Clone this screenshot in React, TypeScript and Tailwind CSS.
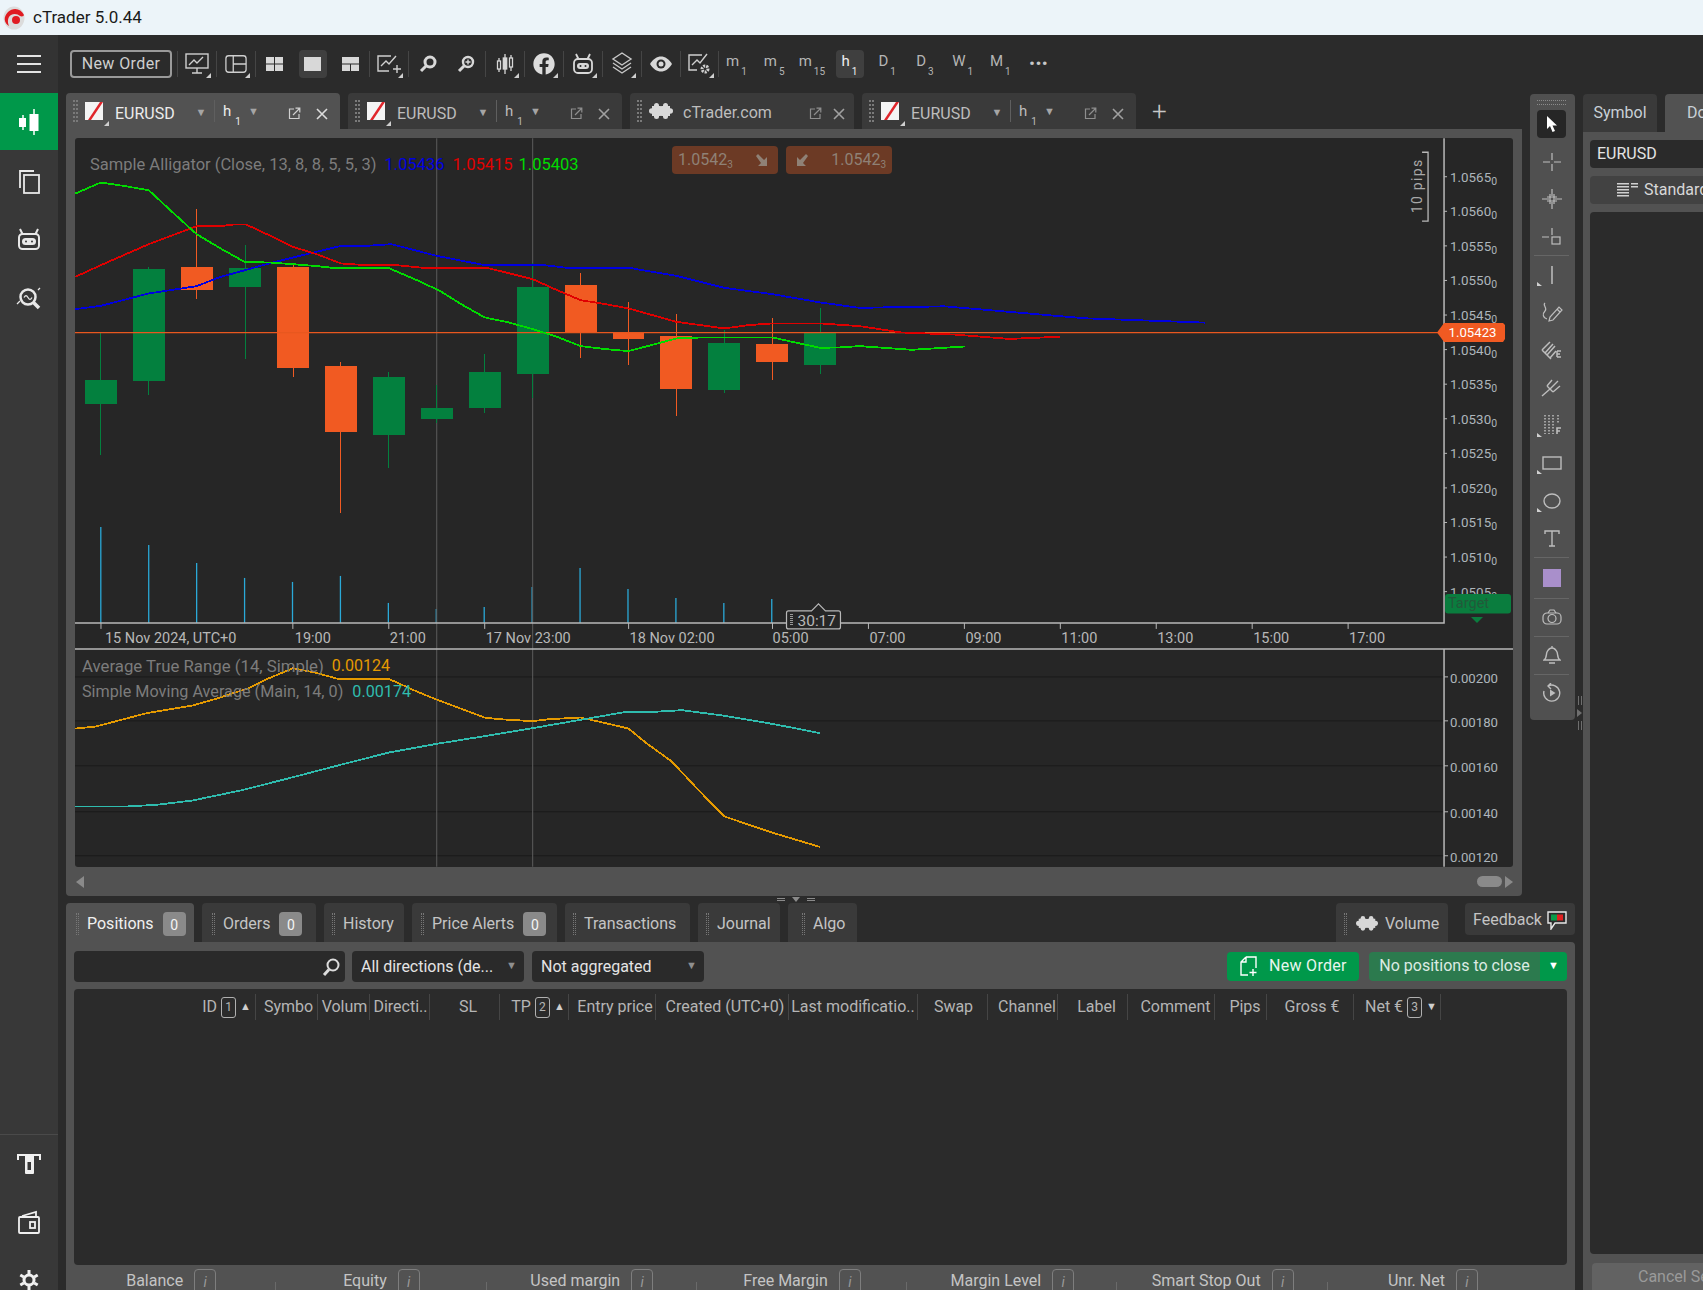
import { FaFacebook } from 'react-icons/fa'

const z7 = (pts: number[][]) => pts.map(([x, y]) => [60 + x / 1.96, 130 + y / 3])
const z8 = (pts: number[][]) => pts.map(([x, y]) => [60 + x / 1.96, 530 + y / 3])
const disp = (pts: number[][]) => pts.map(([x, y]) => [x * 1.0861, y * 1.0859])
const line = (pts: number[][]) => pts.map(([x, y]) => `${x.toFixed(1)},${y.toFixed(1)}`).join(' ')

const greenLine = [
  ...z7([[30, 190], [80, 157], [125, 167], [174, 180], [220, 245], [268, 312], [315, 355], [363, 396], [410, 397], [457, 402], [505, 408], [540, 414], [645, 414], [700, 450], [745, 482], [790, 525], [833, 562], [880, 577], [927, 597], [975, 620], [1021, 648], [1070, 657], [1115, 663], [1165, 643], [1209, 625], [1260, 622], [1397, 622], [1445, 638], [1491, 653], [1530, 652], [1568, 648]]),
  ...disp([[840, 322], [889, 319]]),
]
const redLine = [
  ...z7([[30, 440], [80, 405], [174, 342], [268, 288], [315, 288], [340, 283], [365, 283], [410, 315], [457, 350], [505, 373], [551, 400], [600, 405], [660, 405], [720, 414], [840, 414], [927, 447], [975, 480], [1021, 510], [1070, 522], [1115, 535], [1209, 575], [1303, 595], [1350, 585], [1397, 580], [1491, 580], [1568, 588]]),
  ...disp([[830, 306], [880, 308], [930, 312], [977, 310]]),
]
const blueLine = [
  ...z7([[30, 537], [80, 527], [174, 490], [268, 468], [315, 440], [363, 420], [410, 400], [457, 382], [551, 347], [600, 347], [650, 342], [739, 377], [833, 405], [950, 405], [1000, 414], [1120, 414], [1209, 437], [1303, 473], [1397, 492], [1491, 517], [1568, 533]]),
  ...disp([[870, 282], [1000, 293], [1110, 297]]),
]
const atrLine = z8([[30, 596], [70, 590], [120, 570], [170, 550], [260, 527], [310, 505], [370, 475], [410, 445], [457, 415], [500, 428], [545, 447], [645, 447], [700, 485], [740, 510], [833, 563], [860, 568], [927, 574], [960, 568], [1021, 563], [1070, 580], [1115, 596], [1150, 640], [1200, 695], [1255, 785], [1303, 860], [1400, 910], [1491, 952]])
const smaLine = z8([[30, 830], [130, 830], [190, 825], [260, 812], [360, 780], [450, 745], [550, 705], [645, 668], [739, 642], [833, 619], [927, 595], [1021, 570], [1110, 546], [1165, 546], [1220, 541], [1300, 557], [1400, 583], [1491, 610]])

// cx, body top, body bottom, wick top, wick bottom, up?
const candles: [number, number, number, number, number, boolean][] = [
  [80, 750, 822, 610, 975, true],
  [174, 417, 753, 412, 795, true],
  [268, 412, 480, 237, 507, false],
  [363, 413, 470, 345, 687, true],
  [457, 412, 714, 400, 741, false],
  [551, 709, 907, 696, 1150, false],
  [645, 741, 915, 727, 1015, true],
  [739, 835, 866, 765, 880, true],
  [833, 727, 835, 673, 849, true],
  [927, 471, 731, 400, 805, true],
  [1021, 466, 608, 430, 683, false],
  [1115, 608, 628, 516, 705, false],
  [1209, 619, 776, 552, 858, false],
  [1303, 638, 781, 600, 790, true],
  [1397, 642, 695, 565, 750, false],
  [1491, 610, 704, 535, 731, true],
]
const volumes = [527, 545, 563, 578, 582, 576, 603, 609, 607, 587, 568, 589, 598, 603, 599]
const prices = ['1.0565', '1.0560', '1.0555', '1.0550', '1.0545', '1.0540', '1.0535', '1.0530', '1.0525', '1.0520', '1.0515', '1.0510', '1.0505']
const times: [number, string][] = [[105, '15 Nov 2024, UTC+0'], [295, '19:00'], [390, '21:00'], [486, '17 Nov 23:00'], [630, '18 Nov 02:00'], [773, '05:00'], [870, '07:00'], [966, '09:00'], [1062, '11:00'], [1158, '13:00'], [1254, '15:00'], [1350, '17:00']]
const ticks = [101, 293, 389, 485, 629, 773, 869, 965, 1061, 1157, 1253, 1349]
const subLevels: [number, string][] = [[677, '0.00200'], [721, '0.00180'], [766, '0.00160'], [812, '0.00140'], [856, '0.00120']]

const Corner = () => <span className="absolute bottom-0 right-0 h-0 w-0 border-b-[5px] border-l-[5px] border-b-[#cfcfcf] border-l-transparent" />

function Grip() {
  return <span className="h-[22px] w-[5px] shrink-0 border-x-2 border-dotted border-[#7a7a7a]" />
}

function Puzzle({ w = 24, color = '#d8d8d8', bg = '#3a3a3a' }: { w?: number; color?: string; bg?: string }) {
  return (
    <svg width={w} height={(w * 2) / 3} viewBox="0 0 24 16" fill={color}>
      <rect x="3" y="3" width="18" height="10" />
      <circle cx="2.800" cy="8" r="2.800" />
      <circle cx="21.200" cy="8" r="2.800" />
      <rect x="5" y="0" width="5" height="16" rx="2.500" />
      <rect x="14" y="0" width="5" height="16" rx="2.500" />
      <circle cx="12" cy="1.500" r="1.700" fill={bg} />
      <circle cx="12" cy="14.500" r="1.700" fill={bg} />
    </svg>
  )
}

function Flag() {
  return (
    <span className="relative block h-[24px] w-[24px] shrink-0">
      <svg width="18" height="18" viewBox="0 0 18 18" className="block">
        <rect width="18" height="18" fill="#f4f4f4" />
        <path d="M3 18 15 0h3L6 18z" fill="#e0252b" />
      </svg>
      <Corner />
    </span>
  )
}

function Pop({ dim }: { dim?: boolean }) {
  return (
    <svg width="13" height="13" viewBox="0 0 13 13" fill="none" stroke={dim ? '#8e8e8e' : '#d0d0d0'} strokeWidth="1.2">
      <path d="M6 2H1.5v9.5H11V7" />
      <path d="M5 8l6.5-6.5M7.5 1.2h4.3v4.3" />
    </svg>
  )
}

function Cross({ dim }: { dim?: boolean }) {
  return (
    <svg width="12" height="12" viewBox="0 0 12 12" stroke={dim ? '#a0a0a0' : '#dcdcdc'} strokeWidth="1.6">
      <path d="M1 1l10 10M11 1 1 11" />
    </svg>
  )
}

function Tf({ a, b, on }: { a: string; b: string; on?: boolean }) {
  return (
    <span className={`flex h-[28px] w-[28px] items-center justify-center rounded ${on ? 'bg-[#3f3f3f] text-[#f0f0f0]' : 'text-[#b5b5b5]'}`}>
      <span className="-mt-[5px] text-[15px] leading-none">{a}</span>
      <span className="mt-[15px] ml-[2px] text-[10px] leading-none">{b}</span>
    </span>
  )
}

function SymbolTab({ active, w }: { active?: boolean; w: string }) {
  const fg = active ? 'text-[#ececec]' : 'text-[#bdbdbd]'
  return (
    <div className={`flex h-full shrink-0 items-center rounded-t pl-[7px] ${w} ${active ? 'bg-[#525252]' : 'bg-[#3a3a3a]'}`}>
      <Grip />
      <span className="ml-[7px] mt-[6px]"><Flag /></span>
      <span className={`ml-[6px] mt-[5px] w-[78px] text-[16px] ${fg}`}>EURUSD</span>
      <span className="mt-[4px] w-[16px] text-center text-[11px] text-[#a5a5a5]">▼</span>
      <span className="ml-[5px] h-[22px] w-px bg-[#5f5f5f]" />
      <span className={`ml-[8px] text-[15px] ${fg}`}>h</span>
      <span className={`ml-[4px] mt-[20px] text-[10px] ${fg}`}>1</span>
      <span className="ml-[7px] mt-[2px] text-[11px] text-[#a5a5a5]">▼</span>
      <span className="flex flex-1 justify-end pr-[15px] pt-[5px]"><Pop dim={!active} /></span>
      <span className="w-[24px] pt-[5px]"><Cross dim={!active} /></span>
    </div>
  )
}

function Sep() {
  return <span className="h-[26px] w-px shrink-0 bg-[#454545]" />
}

function TopIcon({ children, corner, on }: { children: React.ReactNode; corner?: boolean; on?: boolean }) {
  return (
    <span className="flex w-[37.900px] shrink-0 justify-center">
      <span className={`relative flex h-[28px] w-[28px] items-center justify-center rounded ${on ? 'bg-[#3f3f3f]' : ''}`}>
        {children}
        {corner && <Corner />}
      </span>
    </span>
  )
}

const stroke = { fill: 'none', stroke: '#cfcfcf', strokeWidth: 1.4 }

function Toolbar() {
  return (
    <div className="flex h-[58px] shrink-0 items-center pl-[4px]">
      <button className="mr-[5px] h-[28px] w-[102px] shrink-0 rounded border-2 border-[#9a9a9a] text-[16px] tracking-[0.4px] text-[#cfcfcf]">New Order</button>
      <Sep />
      <TopIcon corner>
        <svg width="24" height="22" viewBox="0 0 24 22" {...stroke}><rect x="1" y="1" width="22" height="14" /><path d="M4 12l5-5 3 3 6-6M7 20h10M12 15v5" /></svg>
      </TopIcon>
      <Sep />
      <TopIcon corner>
        <svg width="22" height="20" viewBox="0 0 24 20" {...stroke}><rect x="1" y="1" width="22" height="18" rx="3" /><path d="M9 1v18M9 10h14" /></svg>
      </TopIcon>
      <Sep />
      <TopIcon>
        <svg width="17" height="14" viewBox="0 0 17 14" fill="#d8d8d8"><rect width="8" height="6.5" /><rect x="9" width="8" height="6.5" /><rect y="7.5" width="8" height="6.5" /><rect x="9" y="7.5" width="8" height="6.5" /></svg>
      </TopIcon>
      <TopIcon on>
        <svg width="17" height="14" viewBox="0 0 17 14" fill="#d8d8d8"><rect width="17" height="14" /></svg>
      </TopIcon>
      <TopIcon>
        <svg width="17" height="14" viewBox="0 0 17 14" fill="#d8d8d8"><rect width="17" height="6.5" /><rect y="7.5" width="8" height="6.5" /><rect x="9" y="7.5" width="8" height="6.5" /></svg>
      </TopIcon>
      <Sep />
      <TopIcon corner>
        <svg width="24" height="22" viewBox="0 0 24 22" {...stroke}><path d="M14 3H1v15h11" /><path d="M4 13l5-5 3 3 7-8M20 12v8M16 16h8" /></svg>
      </TopIcon>
      <Sep />
      <TopIcon>
        <svg width="18" height="18" viewBox="0 0 18 18" fill="none" stroke="#d8d8d8"><circle cx="11" cy="7" r="5" strokeWidth="3" /><path d="M7 11l-5 5" strokeWidth="3" /></svg>
      </TopIcon>
      <TopIcon>
        <svg width="18" height="18" viewBox="0 0 18 18" fill="none" stroke="#d8d8d8"><circle cx="11" cy="7" r="5" strokeWidth="2.4" /><path d="M7 11l-5 5" strokeWidth="3" /><path d="M11 4.5v5M8.5 7h5" strokeWidth="1.4" /></svg>
      </TopIcon>
      <Sep />
      <TopIcon corner>
        <svg width="20" height="24" viewBox="0 0 20 24" stroke="#d8d8d8" fill="none" strokeWidth="1.3"><path d="M4 6v14M10 2v20M16 3v16" /><rect x="2.5" y="9" width="3" height="8" fill="#2b2b2b" /><rect x="8.3" y="6" width="3.4" height="11" fill="#d8d8d8" /><rect x="14.5" y="6" width="3" height="9" fill="#2b2b2b" /></svg>
      </TopIcon>
      <Sep />
      <TopIcon corner>
        <FaFacebook size={22} color="#dcdcdc" />
      </TopIcon>
      <Sep />
      <TopIcon corner>
        <svg width="24" height="22" viewBox="0 0 24 22" fill="none" stroke="#d8d8d8" strokeWidth="1.8"><path d="M5 1l2.5 5M19 1l-2.5 5" /><rect x="3" y="6" width="18" height="14" rx="4" /><rect x="6" y="10" width="12" height="6" rx="3" fill="#d8d8d8" stroke="none" /><circle cx="9.5" cy="13" r="1" fill="#2b2b2b" stroke="none" /><circle cx="14.5" cy="13" r="1" fill="#2b2b2b" stroke="none" /></svg>
      </TopIcon>
      <Sep />
      <TopIcon corner>
        <svg width="24" height="24" viewBox="0 0 24 24" fill="none" stroke="#c8c8c8" strokeWidth="1.4"><path d="M12 1l9 6-9 6-9-6z" /><path d="M3 11l9 6 9-6M3 15l9 6 9-6" /></svg>
      </TopIcon>
      <Sep />
      <TopIcon>
        <svg width="24" height="16" viewBox="0 0 24 16"><path d="M1 8c3-5 7-7.500 11-7.500S20 3 23 8c-3 5-7 7.500-11 7.500S4 13 1 8z" fill="#d8d8d8" /><circle cx="12" cy="8" r="4.500" fill="#2b2b2b" /><circle cx="12" cy="8" r="2.500" fill="#d8d8d8" /></svg>
      </TopIcon>
      <Sep />
      <TopIcon corner>
        <svg width="24" height="24" viewBox="0 0 24 24" {...stroke}><path d="M14 3H1v15h8" /><path d="M4 13l5-5 3 3 7-9" /><circle cx="17" cy="17" r="3" strokeWidth="3" strokeDasharray="2 1" /></svg>
      </TopIcon>
      <Sep />
      <span className="ml-[3px] flex items-center gap-[9.700px]">
        <Tf a="m" b="1" />
        <Tf a="m" b="5" />
        <Tf a="m" b="15" />
        <Tf a="h" b="1" on />
        <Tf a="D" b="1" />
        <Tf a="D" b="3" />
        <Tf a="W" b="1" />
        <Tf a="M" b="1" />
      </span>
      <span className="ml-[15px] text-[15px] font-bold tracking-[1px] text-[#c8c8c8]">•••</span>
    </div>
  )
}

function Sidebar() {
  return (
    <aside className="flex h-full w-[58px] shrink-0 flex-col bg-[#383838]">
      <div className="flex h-[58px] shrink-0 flex-col items-center justify-center gap-[6px] bg-[#333333]">
        <span className="h-[2px] w-[24px] bg-[#e4e4e4]" />
        <span className="h-[2px] w-[24px] bg-[#e4e4e4]" />
        <span className="h-[2px] w-[24px] bg-[#e4e4e4]" />
      </div>
      <div className="flex h-[57px] shrink-0 items-center justify-center bg-[#00984a]">
        <svg width="22" height="26" viewBox="0 0 22 26" fill="#fff" stroke="#fff" strokeWidth="1.500"><path d="M5 6v15M16 0v26" /><rect x="1" y="9" width="7" height="9" stroke="none" /><rect x="11.500" y="5" width="9" height="17" stroke="none" /></svg>
      </div>
      <div className="flex h-[58px] shrink-0 items-center justify-center pt-[6px]">
        <svg width="22" height="24" viewBox="0 0 22 24" fill="none" stroke="#e8e8e8" strokeWidth="1.800"><path d="M16 1H2v17" /><rect x="6" y="5" width="15" height="18" /></svg>
      </div>
      <div className="flex h-[58px] shrink-0 items-center justify-center pt-[4px]">
        <svg width="24" height="22" viewBox="0 0 24 22" fill="none" stroke="#e8e8e8" strokeWidth="2"><path d="M3 1l2.500 5M21 1l-2.500 5" /><rect x="2" y="6" width="20" height="15" rx="3.500" /><rect x="5" y="10" width="14" height="7" rx="3.500" fill="#e8e8e8" stroke="none" /><circle cx="9" cy="13.500" r="1" fill="#383838" stroke="none" /><circle cx="15" cy="13.500" r="1" fill="#383838" stroke="none" /></svg>
      </div>
      <div className="flex h-[58px] shrink-0 items-center justify-center pt-[6px]">
        <svg width="26" height="24" viewBox="0 0 26 24" fill="none" stroke="#e8e8e8"><circle cx="12" cy="11" r="7.500" strokeWidth="2.500" /><path d="M17 16l6 6" strokeWidth="3.500" /><path d="M8 11.500c1.500-2.500 2.500-2.500 4 0s2.500 2.500 4 0" strokeWidth="1.300" /><path d="M1 18l3-3M22 4l2-2" strokeWidth="1.300" /></svg>
      </div>
      <div className="mt-auto h-[156px] shrink-0 overflow-hidden border-t border-[#4a4a4a]">
        <div className="flex h-[58px] items-center justify-center">
          <svg width="24" height="22" viewBox="0 0 24 22" fill="none" stroke="#f0f0f0" strokeWidth="2"><path d="M1 7V2h22v5" /><rect x="8" y="2" width="9" height="19" rx="1" fill="#f0f0f0" stroke="none" /><rect x="10.500" y="9" width="3.500" height="8" fill="#383838" stroke="none" /></svg>
        </div>
        <div className="flex h-[58px] items-center justify-center">
          <svg width="22" height="24" viewBox="0 0 22 24" fill="none" stroke="#f0f0f0" strokeWidth="1.800"><path d="M4 6l14-4v5" /><rect x="1" y="7" width="20" height="16" rx="1" /><rect x="12" y="12" width="5" height="6" /></svg>
        </div>
        <div className="flex h-[58px] items-center justify-center">
          <svg width="20" height="20" viewBox="0 0 20 20" fill="none" stroke="#f0f0f0"><circle cx="10" cy="10" r="5" strokeWidth="3" /><path d="M10 0v4M10 16v4M1.300 5l3.500 2M15.200 13l3.500 2M1.300 15l3.500-2M15.200 7l3.500-2" strokeWidth="3" /></svg>
        </div>
      </div>
    </aside>
  )
}

function PriceChart() {
  return (
    <svg viewBox="75 138 1439 729" className="absolute inset-0 h-full w-full" style={{ fontFamily: 'Roboto, sans-serif' }}>
      {/* volume */}
      {volumes.map((top, i) => {
        const x = 60 + (80 + i * 94) / 1.96
        return <line key={x} x1={x} x2={x} y1={top} y2={623} stroke="#2aa9d8" strokeWidth="1.300" />
      })}
      {/* sub chart grid */}
      {subLevels.map(([y]) => <line key={y} x1="75" x2="1445" y1={y} y2={y} stroke="#1a1a1a" />)}
      {/* cross lines */}
      <line x1="437" x2="437" y1="138" y2="867" stroke="#5c5c5c" />
      <line x1="533" x2="533" y1="138" y2="867" stroke="#5c5c5c" />
      {/* candles */}
      {candles.map(([cx, t, b, wt, wb, up]) => {
        const x = 60 + cx / 1.96
        const c = up ? '#03803e' : '#f15a22'
        return (
          <g key={cx} shapeRendering="crispEdges">
            <line x1={x} x2={x} y1={130 + wt / 3} y2={130 + wb / 3} stroke={c} />
            <rect x={x - 16} y={130 + t / 3} width="32" height={(b - t) / 3} fill={c} />
          </g>
        )
      })}
      <line x1="75" x2="1445" y1="332.500" y2="332.500" stroke="#e8571f" strokeWidth="1.300" />
      <g fill="none" strokeWidth="1.800" shapeRendering="crispEdges">
        <polyline points={line(blueLine)} stroke="#0000e0" />
        <polyline points={line(redLine)} stroke="#e00000" />
        <polyline points={line(greenLine)} stroke="#00dc00" />
        <polyline points={line(atrLine)} stroke="#e59a00" />
        <polyline points={line(smaLine)} stroke="#2fbcae" />
      </g>
      {/* axes */}
      <path d="M1445 138V623H75" fill="none" stroke="#b8b8b8" strokeWidth="1.500" />
      <path d="M75 649H1514M1445 649V867" fill="none" stroke="#b8b8b8" strokeWidth="1.500" />
      {ticks.map((x) => <line key={x} x1={x} x2={x} y1="623" y2="629" stroke="#b8b8b8" />)}
      {times.map(([x, t]) => <text key={t} x={x} y="643" fontSize="14.500" fill="#b8b8b8">{t}</text>)}
      {prices.map((p, i) => {
        const y = 176.500 + i * 34.600
        return (
          <g key={p}>
            <line x1="1445" x2="1448" y1={y} y2={y} stroke="#b8b8b8" />
            <text x="1451" y={y + 5} fontSize="13.400" fill="#adb5bb">
              {p}
              <tspan fontSize="10.500" dy="3">0</tspan>
            </text>
          </g>
        )
      })}
      {subLevels.map(([y, t]) => (
        <g key={t}>
          <line x1="1445" x2="1449" y1={y} y2={y} stroke="#b8b8b8" />
          <text x="1451" y={y + 6} fontSize="13.200" fill="#adb5bb">{t}</text>
        </g>
      ))}
      {/* current price tag */}
      <path d="M1438 332.500l7-9.500h59l2 2v14l-2 3h-59z" fill="#f15a22" />
      <text x="1449.500" y="337" fontSize="13.200" fill="#fff">1.05423</text>
      {/* target tag */}
      <rect x="1446" y="594" width="66" height="19.500" rx="3" fill="#0a7d3e" />
      <path d="M1472 617h12l-6 6z" fill="#0a7d3e" />
      <text x="1449" y="608.500" fontSize="14.500" fill="#22593a">Target</text>
      {/* 10 pips */}
      <path d="M1423 152h6v69h-6" fill="none" stroke="#b8b8b8" strokeWidth="1.300" />
      <text x="1423" y="213" fontSize="14" fill="#a8a8a8" letterSpacing="1.300" transform="rotate(-90 1423 213)">10 pips</text>
      {/* countdown */}
      <path d="M789 611h23l7-7 7 7h13a2 2 0 0 1 2 2v14a2 2 0 0 1-2 2H789a2 2 0 0 1-2-2v-14a2 2 0 0 1 2-2z" fill="#262626" stroke="#b8b8b8" strokeWidth="1.200" />
      <text x="798" y="626.500" fontSize="15.500" fill="#b8b8b8">30:17</text>
      <path d="M792 614v11" stroke="#9a9a9a" strokeWidth="3" strokeDasharray="1 1" />
    </svg>
  )
}

function DownRight({ flip }: { flip?: boolean }) {
  return (
    <svg width="12" height="12" viewBox="0 0 12 12" fill="#8f8176" className={flip ? '-scale-x-100' : ''}>
      <path d="M0 2 2 0l6 6 3-3v9H2l3-3z" />
    </svg>
  )
}

function ChartPanel() {
  return (
    <div className="flex h-[767px] shrink-0 flex-col rounded-b bg-[#525252] px-[9px] pt-[9px]">
      <div className="relative h-[729px] shrink-0 overflow-hidden rounded-[3px] bg-[#262626]">
        <PriceChart />
        <div className="absolute left-[15px] top-[16px] flex items-center text-[16.500px] leading-[22px]">
          <span className="text-[#7c7c7c]">Sample Alligator (Close, 13, 8, 8, 5, 5, 3)</span>
          <span className="ml-[8px] text-[#0000e0]">1.05436</span>
          <span className="ml-[8px] text-[#e00000]">1.05415</span>
          <span className="ml-[6px] text-[#00dc00]">1.05403</span>
        </div>
        <div className="absolute left-[597px] top-[8px] flex gap-[8px] text-[16px] text-[#8f8176]">
          <div className="flex h-[28px] w-[106px] items-center justify-between rounded bg-[#6c3a25] pl-[6px] pr-[10px]">
            <span>1.0542<sub className="text-[10px]">3</sub></span>
            <DownRight />
          </div>
          <div className="flex h-[28px] w-[106px] items-center justify-between rounded bg-[#6c3a25] pl-[10px] pr-[6px]">
            <DownRight flip />
            <span>1.0542<sub className="text-[10px]">3</sub></span>
          </div>
        </div>
        <div className="absolute left-[7px] top-[517px] flex flex-col gap-[4px] leading-[22px] text-[#7c7c7c]">
          <div className="flex items-center gap-[8px] text-[16.800px]"><span>Average True Range (14, Simple)</span><span className="text-[16px] text-[#e59a00]">0.00124</span></div>
          <div className="flex items-center gap-[9px] text-[16.200px]"><span>Simple Moving Average (Main, 14, 0)</span><span className="text-[#2fbcae]">0.00174</span></div>
        </div>
      </div>
      <div className="flex flex-1 items-center pl-[1px]">
        <span className="h-0 w-0 border-y-[6px] border-r-[8px] border-y-transparent border-r-[#8a8a8a]" />
        <span className="ml-auto h-[11px] w-[25px] rounded-full bg-[#8a8a8a]" />
        <span className="ml-[3px] h-0 w-0 border-y-[6px] border-l-[8px] border-y-transparent border-l-[#8a8a8a]" />
      </div>
    </div>
  )
}

function ToolSep() {
  return <span className="my-[4px] h-px w-[35px] shrink-0 bg-[#666666]" />
}

function Tool({ children, corner }: { children: React.ReactNode; corner?: boolean }) {
  return (
    <span className="relative flex h-[29px] w-[29px] shrink-0 items-center justify-center">
      {children}
      {corner && <span className="absolute bottom-[3px] left-0 h-0 w-0 border-b-[4px] border-r-[5px] border-b-[#d0d0d0] border-r-transparent" />}
    </span>
  )
}

const ts = { fill: 'none', stroke: '#bdbdbd', strokeWidth: 1.2 }

function DrawingBar() {
  return (
    <div className="mt-[1px] flex h-[626px] w-[45px] shrink-0 flex-col items-center rounded bg-[#505050] pr-[2px] pt-[6px]">
      <span className="h-[5px] w-[29px] shrink-0 border-y border-dotted border-[#8a8a8a]" />
      <span className="mt-[5px] flex h-[28px] w-[29px] shrink-0 items-center justify-center rounded bg-[#262626]">
        <svg width="12" height="16" viewBox="0 0 12 16" fill="#fff"><path d="M1 0v13l3-3 2.500 6 2.500-1-2.500-5.500H11z" /></svg>
      </span>
      <div className="mt-[9px] flex flex-col items-center gap-[8.500px]">
        <Tool><svg width="18" height="18" viewBox="0 0 18 18" {...ts}><path d="M9 0v7M9 11v7M0 9h7M11 9h7" /></svg></Tool>
        <Tool><svg width="20" height="20" viewBox="0 0 20 20" {...ts}><path d="M10 0v7M10 13v7M0 10h7M13 10h7M8 5v10M12 5v10M5 8h10M5 12h10" /></svg></Tool>
        <Tool><svg width="20" height="18" viewBox="0 0 20 18" {...ts}><path d="M10 0v7M0 9h7" /><rect x="10" y="9" width="8" height="7" /></svg></Tool>
      </div>
      <ToolSep />
      <div className="flex flex-col items-center gap-[8.700px]">
        <Tool corner><svg width="6" height="18" viewBox="0 0 6 18" stroke="#c8c8c8" strokeWidth="1.400"><path d="M3 0v18" /></svg></Tool>
        <Tool><svg width="22" height="20" viewBox="0 0 22 20" {...ts}><path d="M4 1C1 3 7 6 4 9s-2 7 2 8" /><path d="M9 15l-1 4 4-1L21 8l-3-3zM16 7l3 3" /></svg></Tool>
        <Tool><svg width="22" height="20" viewBox="0 0 22 20" {...ts} strokeWidth={1.500}><path d="M1 10 9 2M4 13 12 4M6 15 14 6M9 18 15 11M1 10l9 9" /><path d="M16 11h4M16 14h3M16 17h4M16 11v6" /></svg></Tool>
        <Tool><svg width="22" height="18" viewBox="0 0 22 18" {...ts} strokeWidth={1.400}><path d="M1 17l8-7M6 7l6 6M6 7l5-6M9 10l8-8M12 13l7-6" /></svg></Tool>
        <Tool corner>
          <svg width="22" height="22" viewBox="0 0 22 22" fill="none" stroke="#bdbdbd">
            <path d="M4 1v19M8 1v19M12 1v19M17 1v9" strokeWidth="1.500" strokeDasharray="1.500 1.500" />
            <path d="M16 20v-6h4M16 17h3" strokeWidth="1.600" />
          </svg>
        </Tool>
        <Tool corner><svg width="20" height="14" viewBox="0 0 20 14" {...ts} strokeWidth={1.400}><rect x="1" y="1" width="18" height="12" /></svg></Tool>
        <Tool corner><svg width="18" height="16" viewBox="0 0 18 16" {...ts} strokeWidth={1.400}><ellipse cx="9" cy="8" rx="8" ry="7" /></svg></Tool>
        <Tool><svg width="16" height="17" viewBox="0 0 16 17" {...ts} strokeWidth={1.400}><path d="M1 4V1h14v3M8 1v15M5 16h6" /></svg></Tool>
      </div>
      <ToolSep />
      <span className="my-[7px] h-[18px] w-[18px] shrink-0 bg-[#a98fcb]" />
      <ToolSep />
      <Tool><svg width="20" height="16" viewBox="0 0 20 16" {...ts}><rect x="1" y="4" width="18" height="11" rx="4" /><circle cx="10" cy="9.500" r="4" /><path d="M6 4l2-3h4l2 3" /></svg></Tool>
      <ToolSep />
      <Tool><svg width="18" height="20" viewBox="0 0 18 20" {...ts} strokeWidth={1.400}><path d="M1 15c3-2 2-6 3-8s3-4 5-4 4 2 5 4 0 6 3 8zM9 1v2M6 18h6" /></svg></Tool>
      <ToolSep />
      <Tool><svg width="20" height="20" viewBox="0 0 20 20" {...ts} strokeWidth={1.400}><path d="M6 3a8 8 0 1 1-4 5M9 0 6 3l3 3" /><path d="M8 6.500v7l5.500-3.500z" fill="#bdbdbd" stroke="none" /></svg></Tool>
    </div>
  )
}

function BottomTab({ label, n, cls, active }: { label: string; n?: number; cls: string; active?: boolean }) {
  return (
    <div className={`flex h-full shrink-0 items-center rounded-t pt-[2px] ${cls} ${active ? 'bg-[#525252] text-[#f0f0f0]' : 'bg-[#3a3a3a] text-[#c4c4c4]'}`}>
      <span className="h-[22px] w-[3px] shrink-0 border-x border-dotted border-[#777777]" />
      <span className="ml-[8px] whitespace-nowrap text-[16px]">{label}</span>
      {n !== undefined && <span className="ml-[9px] flex h-[24px] w-[23px] items-center justify-center rounded bg-[#8a8a8a] pt-[3px] text-[14px] text-[#f4f4f4]">{n}</span>}
    </div>
  )
}

function Caret() {
  return <span className="text-[11px] text-[#8f8f8f]">▼</span>
}

function Badge({ n }: { n: number }) {
  return <span className="mx-[4px] flex h-[21px] w-[15px] shrink-0 items-center justify-center rounded-[3px] border-[1.500px] border-[#b0b0b0] text-[12px] leading-none">{n}</span>
}

const cols: [string, string, number?, string?][] = [
  ['w-[182px] justify-end pr-[4px]', 'ID', 1, '▲'],
  ['w-[62px] justify-center pl-[4px]', 'Symbo'],
  ['w-[52px] justify-center pl-[2px]', 'Volum'],
  ['w-[60px] justify-center pl-[2px]', 'Directi..'],
  ['w-[70px] justify-center pl-[7px]', 'SL'],
  ['w-[69px] justify-center pl-[8px]', 'TP', 2, '▲'],
  ['w-[87px] justify-center pl-[6px]', 'Entry price'],
  ['w-[133px] justify-center pl-[6px]', 'Created (UTC+0)'],
  ['w-[129px] justify-center', 'Last modificatio..'],
  ['w-[70px] justify-center pl-[2px]', 'Swap'],
  ['w-[70px] justify-start pl-[10px]', 'Channel'],
  ['w-[70px] justify-center pl-[8px]', 'Label'],
  ['w-[87px] justify-center pl-[9px]', 'Comment'],
  ['w-[52px] justify-center pl-[9px]', 'Pips'],
  ['w-[87px] justify-center pl-[4px]', 'Gross €'],
  ['w-[87px] justify-center pl-[8px]', 'Net €', 3, '▼'],
]

const stats = ['Balance', 'Equity', 'Used margin', 'Free Margin', 'Margin Level', 'Smart Stop Out', 'Unr. Net']

function BottomPanel() {
  return (
    <>
      <div className="flex h-[39px] shrink-0 gap-[8px]">
        <BottomTab label="Positions" n={0} cls="w-[128px] pl-[10px]" active />
        <BottomTab label="Orders" n={0} cls="w-[114px] pl-[10px]" />
        <BottomTab label="History" cls="w-[80px] pl-[8px]" />
        <BottomTab label="Price Alerts" n={0} cls="w-[145px] pl-[9px]" />
        <BottomTab label="Transactions" cls="w-[125px] pl-[8px]" />
        <BottomTab label="Journal" cls="w-[82px] pl-[8px]" />
        <BottomTab label="Algo" cls="w-[69px] pl-[14px]" />
        <div className="ml-auto flex h-full w-[112px] shrink-0 items-center rounded-t bg-[#3a3a3a] pl-[8px] pt-[2px] text-[#c4c4c4]">
          <span className="h-[22px] w-[3px] shrink-0 border-x border-dotted border-[#777777]" />
          <span className="ml-[9px] flex"><Puzzle w={22} /></span>
          <span className="ml-[7px] text-[16px]">Volume</span>
        </div>
        <div className="ml-[9px] flex h-[32px] w-[110px] shrink-0 items-center justify-center gap-[5px] rounded bg-[#3a3a3a] pt-[1px] text-[16px] text-[#c4c4c4]">
          Feedback
          <svg width="20" height="20" viewBox="0 0 20 20"><path d="M1 2h18v11H8l-4 6v-6H1z" fill="#2b2b2b" stroke="#e8e8e8" strokeWidth="1.400" /><rect x="4" y="4.500" width="6" height="6" fill="#0c9a49" /><rect x="10" y="4.500" width="6" height="6" fill="#e02020" /></svg>
        </div>
      </div>
      <div className="flex min-h-0 flex-1 flex-col rounded-tr bg-[#525252] px-[8px] pt-[9px]">
        <div className="flex h-[31px] shrink-0 items-center">
          <div className="flex h-full w-[271px] items-center justify-end rounded bg-[#2a2a2a] pr-[4px]">
            <svg width="20" height="20" viewBox="0 0 20 20" fill="none" stroke="#dcdcdc"><circle cx="12" cy="8" r="5.500" strokeWidth="2" /><path d="M8 12.500 3 18" strokeWidth="3" /></svg>
          </div>
          <div className="ml-[7px] flex h-full w-[172px] items-center justify-between rounded bg-[#2a2a2a] pl-[9px] pr-[7px] text-[16px] text-[#e4e4e4]">All directions (de... <Caret /></div>
          <div className="ml-[8px] flex h-full w-[172px] items-center justify-between rounded bg-[#2a2a2a] pl-[9px] pr-[7px] text-[16px] text-[#e4e4e4]">Not aggregated <Caret /></div>
          <div className="ml-auto flex h-[29px] w-[132px] items-center rounded bg-[#00984a] pb-[2px] pl-[11px] text-[16px] text-[#e8f5ee]">
            <svg width="20" height="24" viewBox="0 0 20 24" fill="none" stroke="#fff" strokeWidth="1.400"><path d="M8 3h10v11M8 3 3 8v13h7M8 3v5H3M15 15v7M11.500 18.500h7" /></svg>
            <span className="ml-[11px] tracking-[0.3px]">New Order</span>
          </div>
          <div className="ml-[10px] flex h-[29px] w-[198px] overflow-hidden rounded">
            <span className="flex flex-1 items-center justify-center bg-[#2c7a4e] pb-[2px] text-[16px] text-[#dcebe3]">No positions to close</span>
            <span className="flex w-[27px] items-center justify-center bg-[#00984a] text-[11px] text-white">▼</span>
          </div>
        </div>
        <div className="mt-[7px] h-[276px] shrink-0 rounded bg-[#2b2b2b]">
          <div className="flex h-[36px] items-center text-[16px] text-[#b5b5b5]">
            {cols.map(([cls, label, n, arrow]) => (
              <div key={label} className={`flex h-[26px] shrink-0 items-center overflow-hidden whitespace-nowrap border-r border-[#454545] ${cls}`}>
                {label}
                {n !== undefined && <Badge n={n} />}
                {arrow && <span className="text-[11px] text-[#cfcfcf]">{arrow}</span>}
              </div>
            ))}
          </div>
        </div>
        <div className="-ml-[8px] flex h-[25px] shrink-0 items-center">
          {stats.map((s, i) => (
            <div key={s} className="relative flex h-[25px] w-[210.300px] shrink-0 justify-center gap-[11px] pt-[4px]">
              <span className="whitespace-nowrap text-[16px] leading-[24px] text-[#c4c4c4]">{s}</span>
              <span className="flex h-[26px] w-[22px] items-center justify-center rounded-[4px] border border-[#7e7e7e] text-[14px] italic text-[#9a9a9a]">i</span>
              {i < 6 && <span className="absolute bottom-0 right-0 h-[8px] w-px bg-[#6a6a6a]" />}
            </div>
          ))}
        </div>
      </div>
    </>
  )
}

function RightPanel() {
  return (
    <div className="relative flex h-full min-w-0 flex-1 flex-col pt-px">
      <div className="flex h-[38px] shrink-0 gap-[8px]">
        <div className="flex w-[74px] shrink-0 items-center justify-center rounded-t bg-[#3a3a3a] text-[16px] text-[#c8d0d6]">Symbol</div>
        <div className="flex flex-1 items-center overflow-hidden rounded-tl bg-[#525252] pl-[22px] text-[16px] text-[#c8d0d6]">DoM</div>
      </div>
      <div className="flex flex-1 flex-col bg-[#525252] pl-[7px] pt-[8px]">
        <div className="flex h-[28px] shrink-0 items-center rounded-l bg-[#2a2a2a] pl-[7px] text-[16px] text-[#e4e4e4]">EURUSD</div>
        <div className="mt-[8px] flex h-[28px] shrink-0 items-center overflow-hidden rounded-l bg-[#424242] pl-[27px] text-[16px] text-[#d8d8d8]">
          <svg className="mr-[6px] shrink-0" width="21" height="14" viewBox="0 0 21 14" fill="#d0d0d0"><path d="M0 0h12v1.500H0zM0 3h12v1.500H0zM0 6h12v1.500H0zM0 9h12v1.500H0zM0 12h12v1.500H0zM14 0h7v1.500h-7zM14 3h7v1.500h-7z" /></svg>
          Standard
        </div>
        <div className="mt-[8px] h-[1042px] shrink-0 rounded-l bg-[#2b2b2b]" />
        <div className="ml-[2px] mt-[9px] flex flex-1 items-center overflow-hidden rounded-tl bg-[#626262] pl-[46px] text-[16px] text-[#9a9a9a]">
          <span className="whitespace-nowrap">Cancel Selection</span>
        </div>
      </div>
      <span className="absolute -left-[6px] top-[603px] flex flex-col items-center gap-[4px]">
        <span className="h-[9px] w-[4px] border-x border-[#6e6e6e]" />
        <span className="h-0 w-0 border-y-[4px] border-l-[5px] border-y-transparent border-l-[#6e6e6e]" />
        <span className="h-[9px] w-[4px] border-x border-[#6e6e6e]" />
      </span>
    </div>
  )
}

export default function App() {
  return (
    <div className="flex h-[1290px] w-[1703px] flex-col overflow-hidden bg-[#2b2b2b] font-[Roboto,sans-serif]">
      <header className="flex h-[35px] shrink-0 items-center bg-[#ecf4f9] pl-[3px] text-[17px] text-[#1a1a1a]">
        <svg width="22" height="24" viewBox="0 0 22 24">
          <ellipse cx="11" cy="12" rx="10.500" ry="11.500" fill="#dcdcdc" />
          <path d="M21 9C18 2 10 1 5 6s-4 11 1 14c-2-5-1-9 2-11s7-1 9 1c1 .5 3 1 4-1z" fill="#e01b22" />
          <circle cx="13" cy="14" r="4" fill="#e01b22" />
        </svg>
        <span className="ml-[8px]">cTrader 5.0.44</span>
      </header>
      <div className="flex min-h-0 flex-1">
        <Sidebar />
        <div className="flex min-w-0 flex-1 flex-col pl-[8px]">
          <Toolbar />
          <div className="flex min-h-0 flex-1 gap-[8px]">
            <div className="flex w-[1509px] shrink-0 flex-col">
              <div className="flex h-[803px] shrink-0 gap-[8px]">
                <div className="flex w-[1456px] shrink-0 flex-col">
                  <div className="flex h-[36px] shrink-0 items-stretch gap-[8px]">
                    <SymbolTab active w="w-[274px]" />
                    <SymbolTab w="w-[274px]" />
                    <div className="flex w-[224px] shrink-0 items-center rounded-t bg-[#3a3a3a] pl-[7px] text-[#bdbdbd]">
                      <Grip />
                      <span className="ml-[7px] flex"><Puzzle w={24} /></span>
                      <span className="ml-[10px] mt-[4px] w-[126px] text-[16px]">cTrader.com</span>
                      <span className="pt-[5px]"><Pop dim /></span>
                      <span className="ml-[11px] pt-[5px]"><Cross dim /></span>
                    </div>
                    <SymbolTab w="w-[274px]" />
                    <span className="ml-[8px] self-center text-[26px] font-light leading-none text-[#c8c8c8]">+</span>
                  </div>
                  <ChartPanel />
                </div>
                <DrawingBar />
              </div>
              <div className="flex h-[7px] shrink-0 items-center gap-[7px] pl-[711px]">
                <span className="h-[3px] w-[8px] border-y border-[#8a8a8a]" />
                <span className="h-0 w-0 border-x-[4px] border-t-[5px] border-x-transparent border-t-[#8a8a8a]" />
                <span className="h-[3px] w-[8px] border-y border-[#8a8a8a]" />
              </div>
              <BottomPanel />
            </div>
            <RightPanel />
          </div>
        </div>
      </div>
    </div>
  )
}
